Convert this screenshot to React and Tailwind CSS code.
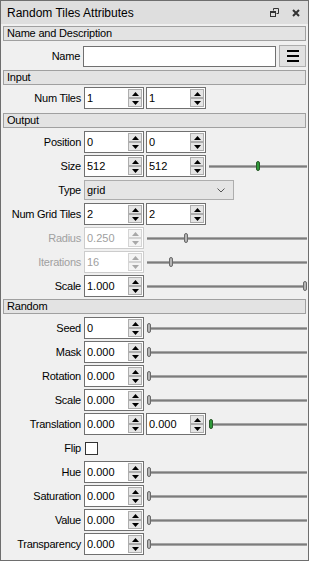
import React from 'react';

function SpinButton({ up, disabled }) {
  const arrow = disabled ? '#a8a8a8' : '#000000';
  return (
    <div className={`flex flex-1 items-center justify-center border ${disabled ? 'border-[#d4d4d4] bg-[#f4f4f4]' : 'border-[#adadad] bg-[#e5e5e5]'}`}>
      <svg width="7" height="4" viewBox="0 0 7 4">
        {up ? <polygon points="0,4 7,4 3.5,0" fill={arrow} /> : <polygon points="0,0 7,0 3.5,4" fill={arrow} />}
      </svg>
    </div>
  );
}

function SpinBox({ value, disabled }) {
  return (
    <div className={`flex h-[22px] w-[60px] shrink-0 border bg-white ${disabled ? 'border-[#cccccc]' : 'border-[#707070]'}`}>
      <div className={`flex-1 pl-[2px] leading-[20px] ${disabled ? 'text-[#a0a0a0]' : 'text-black'}`}>{value}</div>
      <div className="flex w-[15px] flex-col py-[1px] pr-[1px]">
        <SpinButton up disabled={disabled} />
        <SpinButton disabled={disabled} />
      </div>
    </div>
  );
}

function Slider({ pos = 0, green }) {
  return (
    <div className="relative ml-[1px] flex h-[22px] flex-1 items-center">
      <div className="h-[3px] w-full border-y border-[#a4a4a4] bg-[#7c7c7c]" />
      <div
        className={`absolute top-[6px] h-[10px] w-[4px] rounded-[2px] border ${green ? 'border-[#2a5a2a] bg-[#2f9a3a]' : 'border-[#6a6a6a] bg-[#b4b4b4]'}`}
        style={{ left: `calc(${pos}% - ${pos * 0.04}px)` }}
      />
    </div>
  );
}

function Row({ label, disabled, children }) {
  return (
    <div className="flex h-[22px] items-center">
      <div className={`w-[80px] shrink-0 text-right tracking-[-0.25px] ${disabled ? 'text-[#a0a0a0]' : 'text-black'}`}>{label}</div>
      <div className="ml-[3px] flex flex-1 items-center gap-[2px] pr-[1px]">{children}</div>
    </div>
  );
}

function Header({ title, className = '' }) {
  return (
    <div className={`mx-[2px] h-[15px] border border-[#a0a0a0] bg-[#e3e3e3] pl-[3px] leading-[13px] tracking-[-0.2px] text-black ${className}`}>
      {title}
    </div>
  );
}

export default function App() {
  return (
    <div className="flex h-[561px] w-[309px] flex-col border border-[#6e6e6e] bg-[#f0f0f0] font-['Liberation_Sans',Arial,sans-serif] text-[11px] text-black">
      {/* Title bar */}
      <div className="flex h-[23px] shrink-0 items-center bg-[#dedede] pl-[6px] pr-[8px]">
        <span className="flex-1 text-[12px]">Random Tiles Attributes</span>
        <svg width="9" height="9" viewBox="0 0 9 9" className="mr-[13px]">
          <path d="M3.5 2.5 V0.5 H8.5 V5.5 H6.5" fill="none" stroke="#333" strokeWidth="1" />
          <rect x="0.5" y="3.5" width="5" height="5" fill="none" stroke="#333" strokeWidth="1" />
          <rect x="0" y="3" width="6" height="2" fill="#333" />
        </svg>
        <svg width="8" height="8" viewBox="0 0 8 8">
          <path d="M1 1 L7 7 M7 1 L1 7" stroke="#333" strokeWidth="2" />
        </svg>
      </div>

      <Header title="Name and Description" className="mt-[2px]" />
      <div className="mt-[4px] flex h-[22px] items-center">
        <div className="w-[79px] shrink-0 text-right tracking-[-0.25px]">Name</div>
        <div className="ml-[3px] h-[21px] w-[193px] border border-[#707070] bg-white" />
        <div className="ml-[3px] flex h-[22px] w-[27px] flex-col items-center justify-center gap-[3px] border border-[#adadad] bg-[#e1e1e1]">
          <div className="h-[2px] w-[12px] bg-black" />
          <div className="h-[2px] w-[12px] bg-black" />
          <div className="h-[2px] w-[12px] bg-black" />
        </div>
      </div>

      <Header title="Input" className="mt-[3px]" />
      <div className="mt-[2px]">
        <Row label="Num Tiles">
          <SpinBox value="1" />
          <SpinBox value="1" />
        </Row>
      </div>

      <Header title="Output" className="mt-[4px]" />
      <div className="mt-[3px] flex flex-col gap-[2px]">
        <Row label="Position">
          <SpinBox value="0" />
          <SpinBox value="0" />
        </Row>
        <Row label="Size">
          <SpinBox value="512" />
          <SpinBox value="512" />
          <Slider pos={50} green />
        </Row>
        <Row label="Type">
          <div className="flex h-[20px] w-[150px] items-center border border-[#adadad] bg-[#e5e5e5] pl-[2px] pr-[8px]">
            <span className="flex-1">grid</span>
            <svg width="8" height="5" viewBox="0 0 8 5">
              <path d="M0.5 0.5 L4 4 L7.5 0.5" fill="none" stroke="#555" strokeWidth="1" />
            </svg>
          </div>
        </Row>
        <Row label="Num Grid Tiles">
          <SpinBox value="2" />
          <SpinBox value="2" />
        </Row>
        <Row label="Radius" disabled>
          <SpinBox value="0.250" disabled />
          <Slider pos={24} />
        </Row>
        <Row label="Iterations" disabled>
          <SpinBox value="16" disabled />
          <Slider pos={14} />
        </Row>
        <Row label="Scale">
          <SpinBox value="1.000" />
          <Slider pos={100} />
        </Row>
      </div>

      <Header title="Random" className="mt-[2px]" />
      <div className="mt-[3px] flex flex-col gap-[2px]">
        <Row label="Seed">
          <SpinBox value="0" />
          <Slider />
        </Row>
        <Row label="Mask">
          <SpinBox value="0.000" />
          <Slider />
        </Row>
        <Row label="Rotation">
          <SpinBox value="0.000" />
          <Slider />
        </Row>
        <Row label="Scale">
          <SpinBox value="0.000" />
          <Slider />
        </Row>
        <Row label="Translation">
          <SpinBox value="0.000" />
          <SpinBox value="0.000" />
          <Slider green />
        </Row>
        <Row label="Flip">
          <div className="ml-[1px] h-[13px] w-[13px] border border-[#333333] bg-white" />
        </Row>
        <Row label="Hue">
          <SpinBox value="0.000" />
          <Slider />
        </Row>
        <Row label="Saturation">
          <SpinBox value="0.000" />
          <Slider />
        </Row>
        <Row label="Value">
          <SpinBox value="0.000" />
          <Slider />
        </Row>
        <Row label="Transparency">
          <SpinBox value="0.000" />
          <Slider />
        </Row>
      </div>
    </div>
  );
}
